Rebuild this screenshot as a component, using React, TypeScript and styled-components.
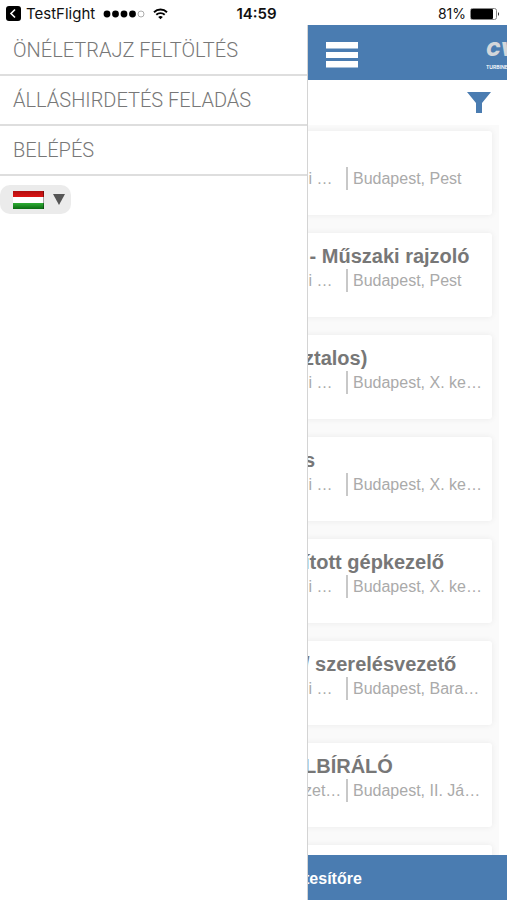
import React from "react";
import styled, { createGlobalStyle } from "styled-components";

const GlobalStyle = createGlobalStyle`
  *, *::before, *::after { box-sizing: border-box; }
  body { margin: 0; background: #fff; font-family: "Liberation Sans", Arial, sans-serif; }
  h2, p, ul { margin: 0; padding: 0; }
  button, select { font: inherit; }
`;

const BLUE = "#4a7cb1";

const Screen = styled.div`
  display: flex;
  flex-direction: column;
  height: 100vh;
  overflow: hidden;
  background: #fff;
`;

const StatusBar = styled.header`
  flex: none;
  display: grid;
  grid-template-columns: 1fr auto 1fr;
  align-items: center;
  height: 25px;
  padding: 2px 0 0 6px;
  font-family: Inter, sans-serif;
  font-size: 14px;
  line-height: 20px;
  color: #111;
`;

const StatusGroup = styled.div<{ $end?: boolean }>`
  display: flex;
  align-items: center;
  justify-content: ${(p) => (p.$end ? "flex-end" : "flex-start")};
  gap: ${(p) => (p.$end ? 4 : 8)}px;
  padding-right: ${(p) => (p.$end ? 7 : 0)}px;
`;

const BackLink = styled.a`
  display: flex;
  align-items: center;
  gap: 5px;
  color: inherit;
  font-size: 15px;
  text-decoration: none;
`;

const Clock = styled.time`
  font-size: 15px;
  font-weight: 600;
`;

const Body = styled.div`
  flex: 1;
  min-height: 0;
  display: flex;
`;

const Drawer = styled.nav`
  flex: none;
  width: 308px;
  padding-top: 1px;
  border-right: 1px solid #d4d4d4;
`;

const MenuList = styled.ul`
  list-style: none;
`;

const MenuLink = styled.a`
  display: flex;
  align-items: center;
  height: 50px;
  padding-left: 13px;
  border-bottom: 2px solid #dedede;
  color: #777;
  font-family: Roboto, sans-serif;
  font-weight: 300;
  font-size: 20px;
  line-height: 24px;
  text-decoration: none;
`;

const LanguagePicker = styled.label`
  position: relative;
  display: flex;
  align-items: center;
  justify-content: space-between;
  width: 71px;
  height: 29px;
  margin-top: 9px;
  padding: 0 6px 0 13px;
  border-radius: 10px;
  background: #ebebeb;
`;

const LanguageSelect = styled.select`
  position: absolute;
  inset: 0;
  width: 100%;
  height: 100%;
  opacity: 0;
`;

const Page = styled.main`
  flex: 1;
  min-width: 0;
  display: flex;
  flex-direction: column;
  overflow: hidden;
`;

const TopBar = styled.div`
  flex: none;
  display: flex;
  align-items: center;
  justify-content: space-between;
  height: 55px;
  padding: 4px 0 0 18px;
  overflow: hidden;
  background: ${BLUE};
`;

const IconButton = styled.button`
  display: flex;
  padding: 0;
  border: 0;
  background: none;
  color: inherit;
`;

const Logo = styled.a`
  display: flex;
  flex-direction: column;
  gap: 1px;
  width: 21px;
  overflow: hidden;
  color: #d3d6da;
  font-family: Inter, sans-serif;
  text-decoration: none;
  white-space: nowrap;
`;

const LogoName = styled.span`
  font-size: 19px;
  font-weight: 900;
  font-style: italic;
  line-height: 24px;
`;

const LogoTagline = styled.span`
  color: #fff;
  font-size: 5px;
  font-weight: 600;
  line-height: 8px;
`;

const FilterRow = styled.div`
  flex: none;
  display: flex;
  justify-content: flex-end;
  height: 45px;
  padding: 12px 16px 0 0;
  color: ${BLUE};
`;

/* The list and the alert bar tuck 4px under the open drawer. */
const JobList = styled.ul`
  flex: 1;
  min-height: 0;
  display: flex;
  flex-direction: column;
  gap: 18px;
  margin: 0 8px 0 -4px;
  padding: 6px 7px 0 0;
  overflow: hidden;
  list-style: none;
  background: #fafafa;
`;

const JobCard = styled.li`
  flex: none;
  height: 84px;
  padding-top: 11px;
  border-radius: 0 3px 3px 0;
  background: #fff;
  box-shadow: 0 0 6px rgba(0, 0, 0, 0.07);
`;

const JobTitle = styled.h2`
  height: 25px;
  color: #777;
  font-size: 20px;
  font-weight: 700;
  line-height: 25px;
  white-space: pre;
`;

const JobMeta = styled.div`
  display: flex;
  color: #aaa;
  font-size: 16px;
  line-height: 23px;
  white-space: pre;
`;

const Category = styled.p`
  width: 42px;
`;

const Place = styled.p`
  flex: 1;
  padding-left: 5px;
  border-left: 2px solid #c8c8c8;
`;

const AlertBar = styled.button`
  flex: none;
  height: 45px;
  margin-left: -4px;
  padding: 3px 0 0;
  border: 0;
  background: ${BLUE};
  color: #fff;
  font-size: 16px;
  font-weight: 700;
  text-align: left;
`;

const menu = ["ÖNÉLETRAJZ FELTÖLTÉS", "ÁLLÁSHIRDETÉS FELADÁS", "BELÉPÉS"];

const jobs = [
  { title: "", category: " i …", place: "Budapest, Pest" },
  { title: " - Műszaki rajzoló", category: " i …", place: "Budapest, Pest" },
  { title: "ztalos)", category: " i …", place: "Budapest, X. ke…" },
  { title: "s", category: " i …", place: "Budapest, X. ke…" },
  { title: "ított gépkezelő", category: " i …", place: "Budapest, X. ke…" },
  { title: "/ szerelésvezető", category: " i …", place: "Budapest, Bara…" },
  { title: "LBÍRÁLÓ", category: "zet…", place: "Budapest, II. Já…" },
  { title: "", category: "", place: "" },
];

const BackIcon = () => (
  <svg width="15" height="15" viewBox="0 0 15 15" aria-hidden="true">
    <rect width="15" height="15" rx="3" fill="#000" />
    <path d="M9 3.5 5 7.5l4 4" fill="none" stroke="#fff" strokeWidth="1.6" />
  </svg>
);

const SignalIcon = () => (
  <svg width="42" height="8" viewBox="0 0 42 8" aria-hidden="true">
    {[4, 12.5, 21, 29.5].map((x) => (
      <circle key={x} cx={x} cy="4" r="3.4" fill="#000" />
    ))}
    <circle cx="38" cy="4" r="3" fill="none" stroke="#999" strokeWidth="0.8" />
  </svg>
);

const WifiIcon = () => (
  <svg width="15" height="12" viewBox="0 0 15 12" aria-hidden="true">
    <path d="M1 4.2a9.3 9.3 0 0 1 13 0M3.3 6.8a6 6 0 0 1 8.4 0" fill="none" stroke="#000" strokeWidth="1.9" />
    <path d="M7.5 11.3 5.2 9a3.3 3.3 0 0 1 4.6 0z" fill="#000" />
  </svg>
);

const BatteryIcon = () => (
  <svg width="30" height="12" viewBox="0 0 30 12" aria-hidden="true">
    <rect x="0.5" y="0.5" width="26" height="11" rx="2" fill="#fff" stroke="#888" />
    <rect x="1" y="1" width="22" height="10" rx="1" fill="#000" />
    <path d="M28 4q2 2 0 4z" fill="#222" />
  </svg>
);

const FlagIcon = () => (
  <svg width="31" height="18" viewBox="0 0 31 18" aria-hidden="true">
    <defs>
      <linearGradient id="red" x1="0" y1="0" x2="0" y2="1">
        <stop offset="0" stopColor="#b01010" />
        <stop offset="1" stopColor="#dc1414" />
      </linearGradient>
      <linearGradient id="green" x1="0" y1="0" x2="0" y2="1">
        <stop offset="0" stopColor="#2fae35" />
        <stop offset="1" stopColor="#0b6a12" />
      </linearGradient>
    </defs>
    <rect width="31" height="18" fill="#fff" />
    <rect width="31" height="6" fill="url(#red)" />
    <rect y="12" width="31" height="6" fill="url(#green)" />
    <path d="M30.5 0v18" stroke="#000" strokeOpacity="0.35" />
  </svg>
);

const ArrowIcon = () => (
  <svg width="12" height="11" viewBox="0 0 12 11" aria-hidden="true">
    <path d="M0 0h12L6 11z" fill="#555" />
  </svg>
);

const BurgerIcon = () => (
  <svg width="32" height="26" viewBox="0 0 32 26" aria-hidden="true">
    <path d="M0 0h32v6.500H0zM0 10h32v6H0zM0 19h32v6.500H0z" fill="#fff" />
  </svg>
);

const FunnelIcon = () => (
  <svg width="24" height="21" viewBox="0 0 24 21" aria-hidden="true">
    <path d="M0 0h24l-9 11v10H9V11z" fill="currentColor" />
  </svg>
);

export default function App() {
  return (
    <>
      <GlobalStyle />
      <Screen>
        <StatusBar>
          <StatusGroup>
            <BackLink href="#back">
              <BackIcon />
              TestFlight
            </BackLink>
            <SignalIcon />
            <WifiIcon />
          </StatusGroup>
          <Clock>14:59</Clock>
          <StatusGroup $end>
            81%
            <BatteryIcon />
          </StatusGroup>
        </StatusBar>
        <Body>
          <Drawer>
            <MenuList>
              {menu.map((item) => (
                <li key={item}>
                  <MenuLink href="#menu">{item}</MenuLink>
                </li>
              ))}
            </MenuList>
            <LanguagePicker>
              <FlagIcon />
              <ArrowIcon />
              <LanguageSelect aria-label="Nyelv" defaultValue="hu">
                <option value="hu">Magyar</option>
              </LanguageSelect>
            </LanguagePicker>
          </Drawer>
          <Page>
            <TopBar>
              <IconButton type="button" aria-label="Menü">
                <BurgerIcon />
              </IconButton>
              <Logo href="#home">
                <LogoName>CV</LogoName>
                <LogoTagline>TURBINE</LogoTagline>
              </Logo>
            </TopBar>
            <FilterRow>
              <IconButton type="button" aria-label="Szűrés">
                <FunnelIcon />
              </IconButton>
            </FilterRow>
            <JobList>
              {jobs.map((job, index) => (
                <JobCard key={index}>
                  <JobTitle>{job.title}</JobTitle>
                  <JobMeta>
                    <Category>{job.category}</Category>
                    <Place>{job.place}</Place>
                  </JobMeta>
                </JobCard>
              ))}
            </JobList>
            <AlertBar type="button">tesítőre</AlertBar>
          </Page>
        </Body>
      </Screen>
    </>
  );
}
